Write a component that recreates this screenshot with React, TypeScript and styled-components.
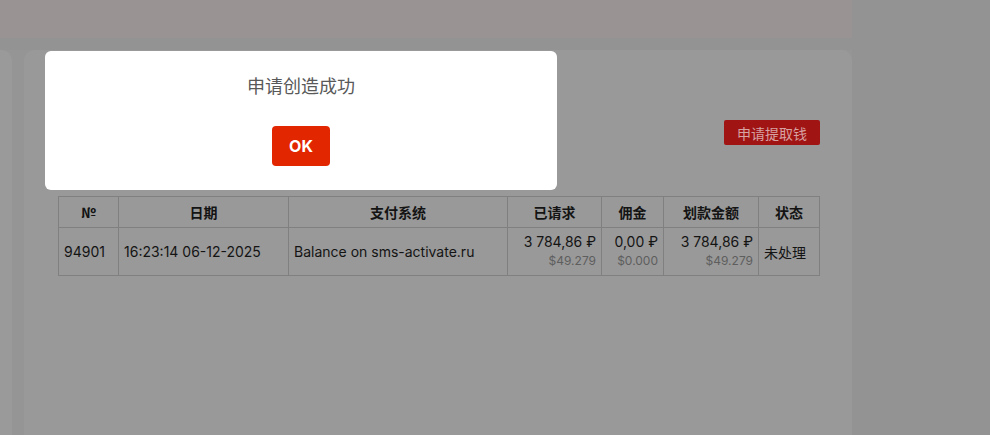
import React from "react";
import styled, { createGlobalStyle } from "styled-components";

const Global = createGlobalStyle`
  html, body { margin: 0; padding: 0; }
  body {
    background: #939393;
    font-family: Inter, "Noto Sans CJK SC", sans-serif;
    overflow: hidden;
  }
`;

const Page = styled.div`
  width: 990px;
  height: 435px;
  display: flex;
  flex-direction: column;
  overflow: hidden;
`;

const TopBar = styled.div`
  width: 852px;
  height: 38px;
  flex: none;
  background: #9a9393;
`;

const Body = styled.div`
  display: flex;
  gap: 12px;
  margin-top: 12px;
  flex: 1;
  background: #959595;
  width: 852px;
`;

const Sidebar = styled.div`
  width: 13px;
  background: #9a9a9a;
  border-top-right-radius: 10px;
`;

const Card = styled.div`
  flex: 1;
  background: #999999;
  border-radius: 10px 10px 0 0;
  padding: 70px 32px 0 34px;
  display: flex;
  flex-direction: column;
`;

const Actions = styled.div`
  display: flex;
  justify-content: flex-end;
  margin-bottom: 51px;
`;

const WithdrawButton = styled.button`
  height: 25px;
  width: 96px;
  border: none;
  border-radius: 2px;
  background: #a11414;
  color: #d7a2a2;
  font-family: "Noto Sans CJK SC", sans-serif;
  font-size: 14px;
  padding: 0;
`;

const Table = styled.table`
  border-collapse: collapse;
  width: 761px;
  table-layout: fixed;
  color: #141414;
  font-size: 14px;
`;

const Th = styled.th`
  border: 1px solid #808080;
  height: 30px;
  font-family: "Noto Sans CJK SC", sans-serif;
  font-weight: 700;
  font-size: 14px;
  padding: 0;
  text-align: center;
`;

const Td = styled.td<{ $align?: string }>`
  border: 1px solid #808080;
  height: 47px;
  padding: 0 5px;
  text-align: ${(p) => p.$align || "left"};
  vertical-align: middle;
  font-family: Inter, "Noto Sans CJK SC", sans-serif;
`;

const Amount = styled.div`
  display: flex;
  flex-direction: column;
  align-items: flex-end;
  line-height: 18px;
  padding-top: 1px;
`;

const Main = styled.span`
  font-size: 14px;
`;

const Sub = styled.span`
  font-size: 12px;
  color: #5e5e5e;
  line-height: 20px;
`;

const ModalLayer = styled.div`
  position: fixed;
  inset: 0;
`;

const Dialog = styled.div`
  position: absolute;
  left: 45px;
  top: 51px;
  width: 512px;
  height: 139px;
  background: #ffffff;
  border-radius: 6px;
  display: flex;
  flex-direction: column;
  align-items: center;
`;

const Title = styled.div`
  margin-top: 21px;
  font-family: "Noto Sans CJK SC", sans-serif;
  font-size: 18px;
  line-height: 26px;
  color: #595959;
`;

const OkButton = styled.button`
  margin-top: 28px;
  width: 58px;
  height: 40px;
  border: none;
  border-radius: 4px;
  background: #e12600;
  color: #ffffff;
  font-family: Inter, sans-serif;
  font-weight: 700;
  font-size: 16px;
  padding: 0;
`;

const cols = [60, 170, 219, 94, 62, 95, 61];

export default function App() {
  return (
    <>
      <Global />
      <Page>
        <TopBar />
        <Body>
          <Sidebar />
          <Card>
            <Actions>
              <WithdrawButton>申请提取钱</WithdrawButton>
            </Actions>
            <Table>
              <colgroup>
                {cols.map((w, i) => (
                  <col key={i} style={{ width: w }} />
                ))}
              </colgroup>
              <thead>
                <tr>
                  <Th>№</Th>
                  <Th>日期</Th>
                  <Th>支付系统</Th>
                  <Th>已请求</Th>
                  <Th>佣金</Th>
                  <Th>划款金额</Th>
                  <Th>状态</Th>
                </tr>
              </thead>
              <tbody>
                <tr>
                  <Td>94901</Td>
                  <Td>16:23:14 06-12-2025</Td>
                  <Td>Balance on sms-activate.ru</Td>
                  <Td $align="right">
                    <Amount>
                      <Main>3 784,86 ₽</Main>
                      <Sub>$49.279</Sub>
                    </Amount>
                  </Td>
                  <Td $align="right">
                    <Amount>
                      <Main>0,00 ₽</Main>
                      <Sub>$0.000</Sub>
                    </Amount>
                  </Td>
                  <Td $align="right">
                    <Amount>
                      <Main>3 784,86 ₽</Main>
                      <Sub>$49.279</Sub>
                    </Amount>
                  </Td>
                  <Td>未处理</Td>
                </tr>
              </tbody>
            </Table>
          </Card>
        </Body>
      </Page>
      <ModalLayer>
        <Dialog>
          <Title>申请创造成功</Title>
          <OkButton>OK</OkButton>
        </Dialog>
      </ModalLayer>
    </>
  );
}
